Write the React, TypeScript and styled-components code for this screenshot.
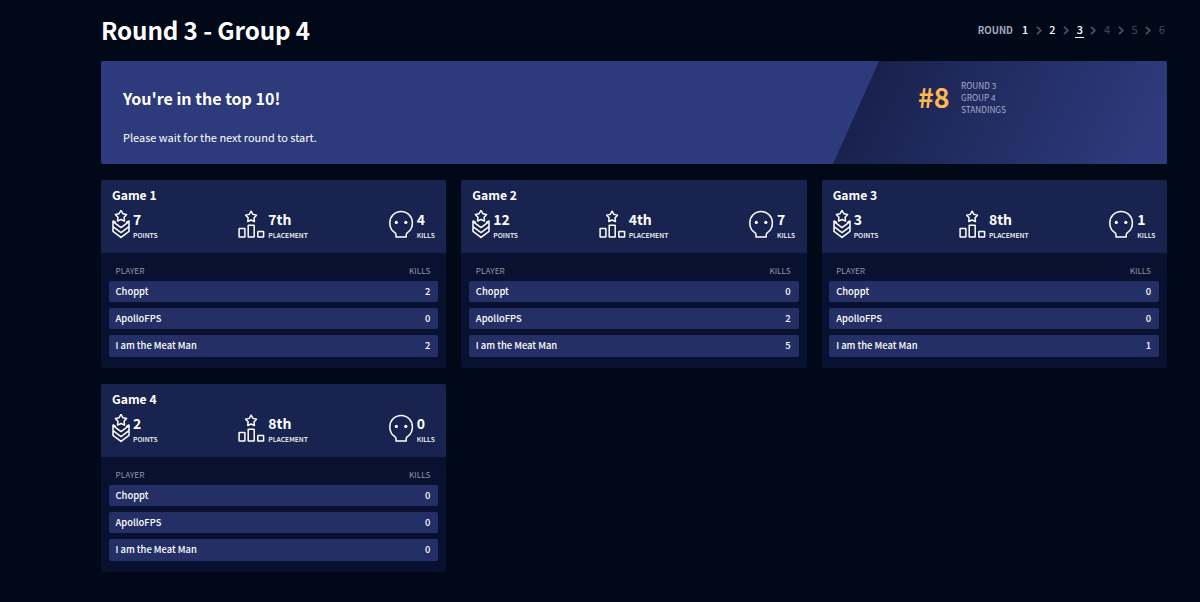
import React from "react";
import styled, { createGlobalStyle } from "styled-components";

const Global = createGlobalStyle`
  * { box-sizing: border-box; }
  body {
    margin: 0;
    background: #010919;
    color: #fff;
    font-family: "Noto Sans CJK JP", "Noto Sans", sans-serif;
    font-weight: 500;
  }
`;

const Page = styled.main`
  width: 1066px;
  height: 602px;
  margin-left: 101px;
  overflow: hidden;
`;

const TopBar = styled.header`
  display: flex;
  justify-content: space-between;
  align-items: flex-start;
  height: 61px;
  padding-top: 10px;
`;

const Title = styled.h1`
  margin: 0;
  font-size: 24.2px;
  line-height: 39px;
  font-weight: 700;
  letter-spacing: -0.12px;
`;

const Rounds = styled.nav`
  display: flex;
  align-items: center;
  height: 16px;
  margin-top: 12px;
  padding-right: 0.6px;
`;

const RoundsLabel = styled.span`
  margin-right: 7.6px;
  color: #a3abb8;
  font-size: 9.6px;
  line-height: 16px;
  font-weight: 700;
`;

const RoundStep = styled.span<{ $state: "done" | "current" | "next" }>`
  width: 9px;
  height: 16px;
  font-size: 10.8px;
  line-height: 15px;
  text-align: center;
  color: ${(p) => (p.$state === "next" ? "#3a4152" : "#fff")};
  border-bottom: 1px solid ${(p) => (p.$state === "current" ? "#fff" : "transparent")};
`;

const ChevronIcon = styled.svg`
  width: 6px;
  height: 9px;
  margin: 0 6.2px;
  fill: none;
  stroke: #4d5565;
  stroke-width: 1.7;
`;

const Banner = styled.section`
  display: flex;
  justify-content: space-between;
  height: 103px;
  border-radius: 2px;
  overflow: hidden;
  background: #2d3a7b;
`;

const Message = styled.div`
  padding: 26px 22px 0;
`;

const MessageTitle = styled.h2`
  margin: 0 0 15px;
  font-size: 16px;
  line-height: 23px;
  font-weight: 700;
`;

const MessageText = styled.p`
  margin: 0;
  font-size: 10.98px;
  line-height: 24px;
  font-weight: 400;
`;

const Standing = styled.div`
  display: flex;
  align-items: flex-start;
  width: 334px;
  padding: 18px 0 0 85px;
  background: linear-gradient(115deg, #19224f 14%, #2d3a7b 90%);
  clip-path: polygon(46px 0, 100% 0, 100% 100%, 0 100%);
`;

const Rank = styled.strong`
  width: 43px;
  font-size: 26.8px;
  line-height: 36px;
  font-weight: 700;
  color: #ffb84d;
`;

const RankCaption = styled.span`
  font-size: 8.25px;
  line-height: 12px;
  font-weight: 400;
  color: #a9afcb;
`;

const Games = styled.section`
  display: grid;
  grid-template-columns: repeat(3, 1fr);
  gap: 16px 15px;
  margin-top: 16px;
`;

const Card = styled.article`
  height: 188px;
  border-radius: 2px;
  overflow: hidden;
  background: #081130;
`;

const CardHead = styled.div`
  height: 73px;
  padding: 5px 11.5px 0 11px;
  background: #19234f;
`;

const CardTitle = styled.h3`
  margin: 0;
  font-size: 12.15px;
  line-height: 19px;
  font-weight: 700;
`;

const Stats = styled.div`
  display: flex;
  justify-content: space-between;
  margin-top: 6px;
`;

const Stat = styled.div`
  display: flex;
`;

const StatIcon = styled.svg`
  height: 29px;
  margin-right: 3px;
  fill: none;
  stroke: #fff;
  stroke-width: 1.5;
  stroke-linejoin: round;
`;

const StatText = styled.div`
  display: flex;
  flex-direction: column;
`;

const StatValue = styled.span`
  margin-bottom: 2px;
  font-size: 14px;
  line-height: 18px;
  font-weight: 700;
`;

const StatName = styled.span`
  font-size: 6.8px;
  line-height: 10px;
`;

const CardBody = styled.div`
  padding: 9px 8px 0 7.5px;
`;

const Columns = styled.div`
  display: flex;
  justify-content: space-between;
  padding: 0 8px 0 7px;
  font-size: 8.2px;
  line-height: 16px;
  margin-bottom: 2.7px;
  font-weight: 400;
  color: #9095a8;
`;

const PlayerRow = styled.div`
  display: flex;
  justify-content: space-between;
  height: 21.4px;
  margin-bottom: 6px;
  padding: 0 8px 0 7px;
  border-radius: 2px;
  background: #242f65;
  font-size: 9.4px;
  line-height: 21.2px;
`;

const star = (cx: number, cy: number, r: number) =>
  Array.from({ length: 10 }, (_, i) => {
    const radius = i % 2 ? r * 0.55 : r;
    const a = (Math.PI / 5) * i - Math.PI / 2;
    return `${(cx + radius * Math.cos(a)).toFixed(2)},${(cy + radius * Math.sin(a)).toFixed(2)}`;
  }).join(" ");

const PointsIcon = () => (
  <StatIcon width="18" viewBox="0 0 18 29">
    <path d="M4 12.6 L1 11 V21.4 L9 27.4 L17 21.4 V11 L14 12.6 M1 11.6 L9 17.6 L17 11.6 M1 16.6 L9 22.6 L17 16.6" />
    <polygon points={star(9, 6.3, 5.9)} />
  </StatIcon>
);

const PlacementIcon = () => (
  <StatIcon width="27" viewBox="0 0 27 29">
    <polygon points={star(13.1, 6.9, 5.7)} />
    <rect x="1.1" y="18.4" width="5.8" height="8.7" rx="0.4" />
    <rect x="10.2" y="15.2" width="6" height="11.9" rx="0.4" />
    <rect x="19.8" y="21.5" width="5.8" height="5.6" rx="0.4" />
  </StatIcon>
);

const SkullIcon = () => (
  <StatIcon width="25" viewBox="0 0 25 29">
    <path d="M7 27.1 V24.8 C7 23.2 6.1 22.8 4.8 21.8 C2.3 19.7 0.8 16.6 0.8 12.9 A11.3 11.4 0 0 1 23.4 12.9 C23.4 16.6 21.9 19.7 19.4 21.8 C18.1 22.8 17.2 23.2 17.2 24.8 V27.1 Z" />
    <circle cx="7.3" cy="12.4" r="1.6" fill="#fff" stroke="none" />
    <circle cx="16.8" cy="12.4" r="1.6" fill="#fff" stroke="none" />
  </StatIcon>
);

interface Game {
  points: number;
  placement: string;
  kills: number;
  players: [string, number][];
}

const lineup = (a: number, b: number, c: number): [string, number][] => [
  ["Choppt", a],
  ["ApolloFPS", b],
  ["I am the Meat Man", c],
];

const games: Game[] = [
  { points: 7, placement: "7th", kills: 4, players: lineup(2, 0, 2) },
  { points: 12, placement: "4th", kills: 7, players: lineup(0, 2, 5) },
  { points: 3, placement: "8th", kills: 1, players: lineup(0, 0, 1) },
  { points: 2, placement: "8th", kills: 0, players: lineup(0, 0, 0) },
];

const StatBlock = ({ icon, value, name }: { icon: React.ReactNode; value: string | number; name: string }) => (
  <Stat>
    {icon}
    <StatText>
      <StatValue>{value}</StatValue>
      <StatName>{name}</StatName>
    </StatText>
  </Stat>
);

const GameCard = ({ game, index }: { game: Game; index: number }) => (
  <Card>
    <CardHead>
      <CardTitle>Game {index}</CardTitle>
      <Stats>
        <StatBlock icon={<PointsIcon />} value={game.points} name="POINTS" />
        <StatBlock icon={<PlacementIcon />} value={game.placement} name="PLACEMENT" />
        <StatBlock icon={<SkullIcon />} value={game.kills} name="KILLS" />
      </Stats>
    </CardHead>
    <CardBody>
      <Columns>
        <span>PLAYER</span>
        <span>KILLS</span>
      </Columns>
      {game.players.map(([name, kills]) => (
        <PlayerRow key={name}>
          <span>{name}</span>
          <span>{kills}</span>
        </PlayerRow>
      ))}
    </CardBody>
  </Card>
);

const CURRENT_ROUND = 3;

export default function App() {
  return (
    <Page>
      <Global />
      <TopBar>
        <Title>Round 3 - Group 4</Title>
        <Rounds>
          <RoundsLabel>ROUND</RoundsLabel>
          {[1, 2, 3, 4, 5, 6].map((n) => (
            <React.Fragment key={n}>
              {n > 1 && (
                <ChevronIcon viewBox="0 0 6 9">
                  <path d="M1 0.8 L4.8 4.5 L1 8.2" />
                </ChevronIcon>
              )}
              <RoundStep $state={n < CURRENT_ROUND ? "done" : n === CURRENT_ROUND ? "current" : "next"}>{n}</RoundStep>
            </React.Fragment>
          ))}
        </Rounds>
      </TopBar>
      <Banner>
        <Message>
          <MessageTitle>You're in the top 10!</MessageTitle>
          <MessageText>Please wait for the next round to start.</MessageText>
        </Message>
        <Standing>
          <Rank>#8</Rank>
          <RankCaption>
            ROUND 3<br />
            GROUP 4<br />
            STANDINGS
          </RankCaption>
        </Standing>
      </Banner>
      <Games>
        {games.map((game, i) => (
          <GameCard key={i} game={game} index={i + 1} />
        ))}
      </Games>
    </Page>
  );
}
